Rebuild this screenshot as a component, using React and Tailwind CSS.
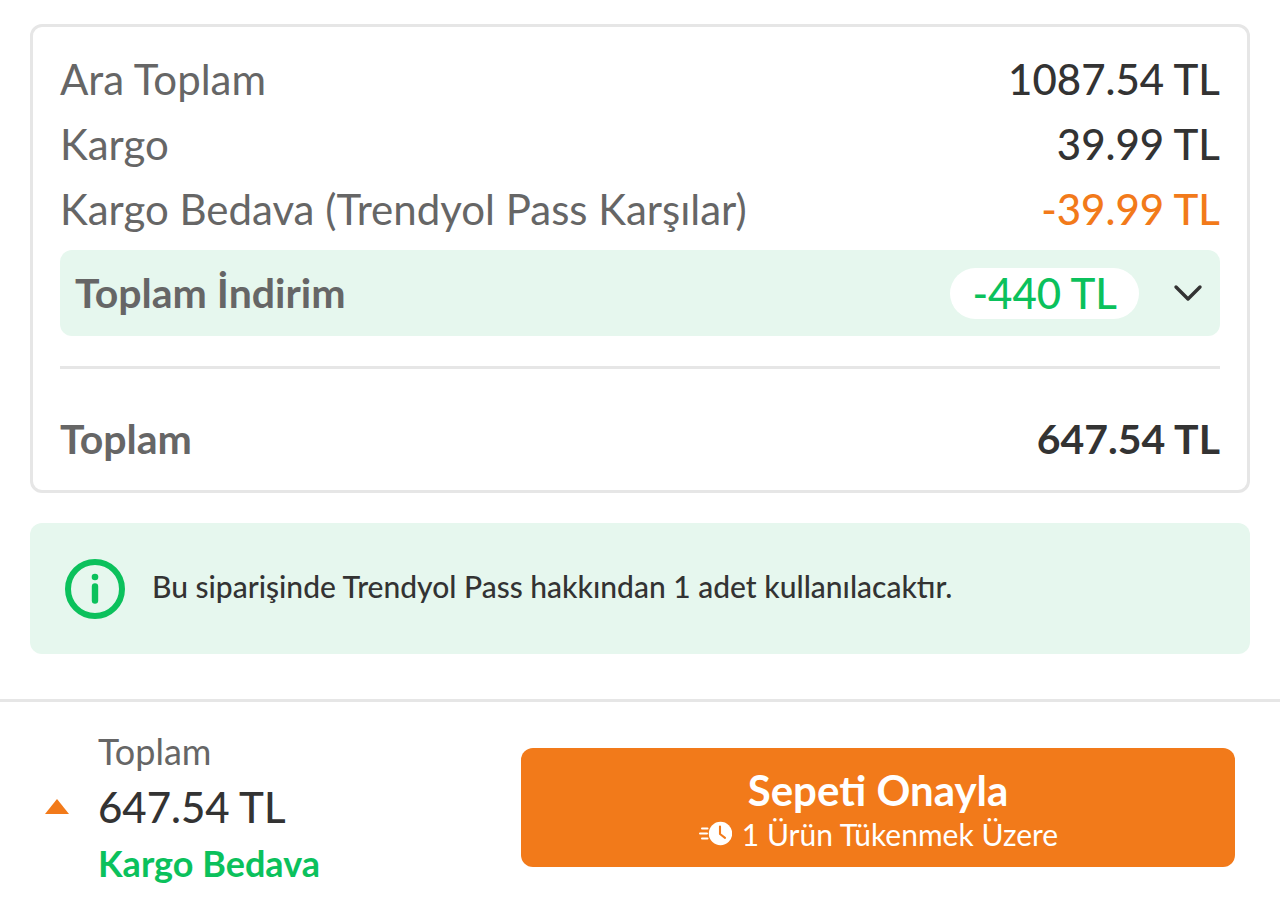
import React from 'react';

const rows = [
  { label: 'Ara Toplam', value: '1087.54 TL', color: 'text-[#333333]' },
  { label: 'Kargo', value: '39.99 TL', color: 'text-[#333333]' },
  { label: 'Kargo Bedava (Trendyol Pass Karşılar)', value: '-39.99 TL', color: 'text-[#f27a1a]' },
];

const ClockIcon = () => (
  <svg width="34" height="26" viewBox="0 0 34 26" fill="none" aria-hidden="true">
    <circle cx="22.5" cy="12.5" r="11.7" fill="#fff" />
    <path d="M22 5.5v7.5l5 3.8" stroke="#f27a1a" strokeWidth="2.1" strokeLinecap="round" strokeLinejoin="round" />
    <path d="M4 7.5h5.5M2 12.5h7M4 17.5h5.5" stroke="#fff" strokeWidth="2" strokeLinecap="round" />
  </svg>
);

const App = () => {
  return (
    <div className="min-h-screen bg-white font-['Lato',sans-serif] text-[#333333]">
      <main className="px-[30px] pt-6 pb-[45px]">
        <section className="rounded-xl border-3 border-[#e6e6e6] px-[27px] pt-5 pb-[18px]">
          {rows.map((row) => (
            <div key={row.label} className="flex items-center justify-between text-[42px] leading-[65px]">
              <span className="text-[#666666]">{row.label}</span>
              <span className={`font-medium ${row.color}`}>{row.value}</span>
            </div>
          ))}

          <button type="button" className="mt-2 flex h-[86px] w-full items-center rounded-xl bg-[#e6f7ee] px-[15px]">
            <span className="text-[41px] font-bold text-[#666666]">Toplam İndirim</span>
            <span className="ml-auto flex h-[51px] items-center rounded-full bg-white px-[22px] text-[42px] font-medium text-[#0bc15c]">
              -440 TL
            </span>
            <svg className="ml-8" width="34" height="34" viewBox="0 0 34 34" fill="none" aria-hidden="true">
              <path d="M5 11l12 12 12-12" stroke="#333333" strokeWidth="3.4" strokeLinecap="round" strokeLinejoin="round" />
            </svg>
          </button>

          <hr className="mt-[30px] border-t-3 border-[#e6e6e6]" />

          <div className="mt-[37px] mb-px flex items-center justify-between text-[41px] leading-[65px] font-bold">
            <span className="text-[#666666]">Toplam</span>
            <span>647.54 TL</span>
          </div>
        </section>

        <section className="mt-[30px] flex h-[131px] items-center rounded-xl bg-[#e6f7ee] px-[35px]">
          <svg width="60" height="60" viewBox="0 0 60 60" fill="none" aria-hidden="true">
            <circle cx="30" cy="30" r="27" stroke="#0bc15c" strokeWidth="6" />
            <circle cx="30" cy="18" r="3.3" fill="#0bc15c" />
            <path d="M30 27.5v14" stroke="#0bc15c" strokeWidth="6.4" strokeLinecap="round" />
          </svg>
          <p className="ml-[27px] pb-1 text-[30px] font-medium">Bu siparişinde Trendyol Pass hakkından 1 adet kullanılacaktır.</p>
        </section>
      </main>

      <footer className="flex items-center justify-between border-t-3 border-[#e6e6e6] px-[45px] py-[21px]">
        <div className="flex items-center">
          <svg width="24" height="16" viewBox="0 0 24 16" aria-hidden="true">
            <path d="M12 0l12 15H0z" fill="#f27a1a" />
          </svg>
          <div className="ml-[29px] leading-[56px]">
            <p className="text-[36px] text-[#666666]">Toplam</p>
            <p className="text-[42px] font-medium">647.54 TL</p>
            <p className="text-[36px] font-bold text-[#0bc15c]">Kargo Bedava</p>
          </div>
        </div>
        <button type="button" className="flex h-[119px] w-3/5 flex-col items-center justify-center rounded-xl bg-[#f27a1a] pt-1.5 text-white">
          <span className="text-[42px] leading-[48px] font-bold">Sepeti Onayla</span>
          <span className="flex items-center gap-2.5 text-[30px] leading-[40px]">
            <ClockIcon />
            1 Ürün Tükenmek Üzere
          </span>
        </button>
      </footer>
    </div>
  );
};

export default App;
